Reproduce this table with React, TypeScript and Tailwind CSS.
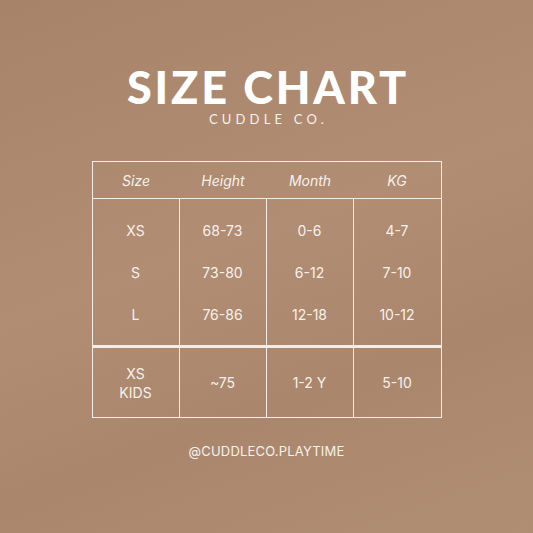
const rows = [
  ["XS", "68-73", "0-6", "4-7"],
  ["S", "73-80", "6-12", "7-10"],
  ["L", "76-86", "12-18", "10-12"],
];

const heads = ["Size", "Height", "Month", "KG"];

export default function App() {
  return (
    <div className="w-[533px] h-[533px] bg-[linear-gradient(160deg,#a7836a_0%,#b08d73_45%,#aa866c_70%,#b08e74_100%)] flex flex-col items-center text-[#f7f1ec] font-['Inter',sans-serif]">
      <h1 className="mt-[67px] text-[45px] leading-[40px] font-black tracking-[2.8px] pl-[3px] text-white font-['Lato',sans-serif]">
        SIZE CHART
      </h1>
      <p className="mt-[5px] text-[13px] leading-[14px] tracking-[4.2px] pl-[4px] font-['Lato',sans-serif]">
        CUDDLE CO.
      </p>

      <div className="mt-[35px] w-[350px] text-[14px]">
        <div className="grid grid-cols-4 h-[38px] items-center text-center italic border-[1.5px] border-[#f4ece6]">
          {heads.map((h) => (
            <span key={h}>{h}</span>
          ))}
        </div>
        <div className="grid grid-cols-4 divide-x-[1.5px] divide-[#f4ece6] border-x-[1.5px] border-b-[1.5px] border-[#f4ece6]">
          {[0, 1, 2, 3].map((c) => (
            <div key={c} className="flex flex-col py-[10px]">
              {rows.map((r, i) => (
                <span key={i} className="h-[42px] flex items-center justify-center">
                  {r[c]}
                </span>
              ))}
            </div>
          ))}
        </div>
        <div className="grid grid-cols-4 h-[72px] text-center divide-x-[1.5px] divide-[#f4ece6] border-[1.5px] border-t-2 border-[#f4ece6]">
          <div className="flex flex-col items-center justify-center leading-[19px]">
            <span>XS</span>
            <span>KIDS</span>
          </div>
          <div className="flex items-center justify-center">~75</div>
          <div className="flex items-center justify-center">1-2 Y</div>
          <div className="flex items-center justify-center">5-10</div>
        </div>
      </div>

      <p className="mt-[24px] text-[13px] tracking-[0.2px]">@CUDDLECO.PLAYTIME</p>
    </div>
  );
}
